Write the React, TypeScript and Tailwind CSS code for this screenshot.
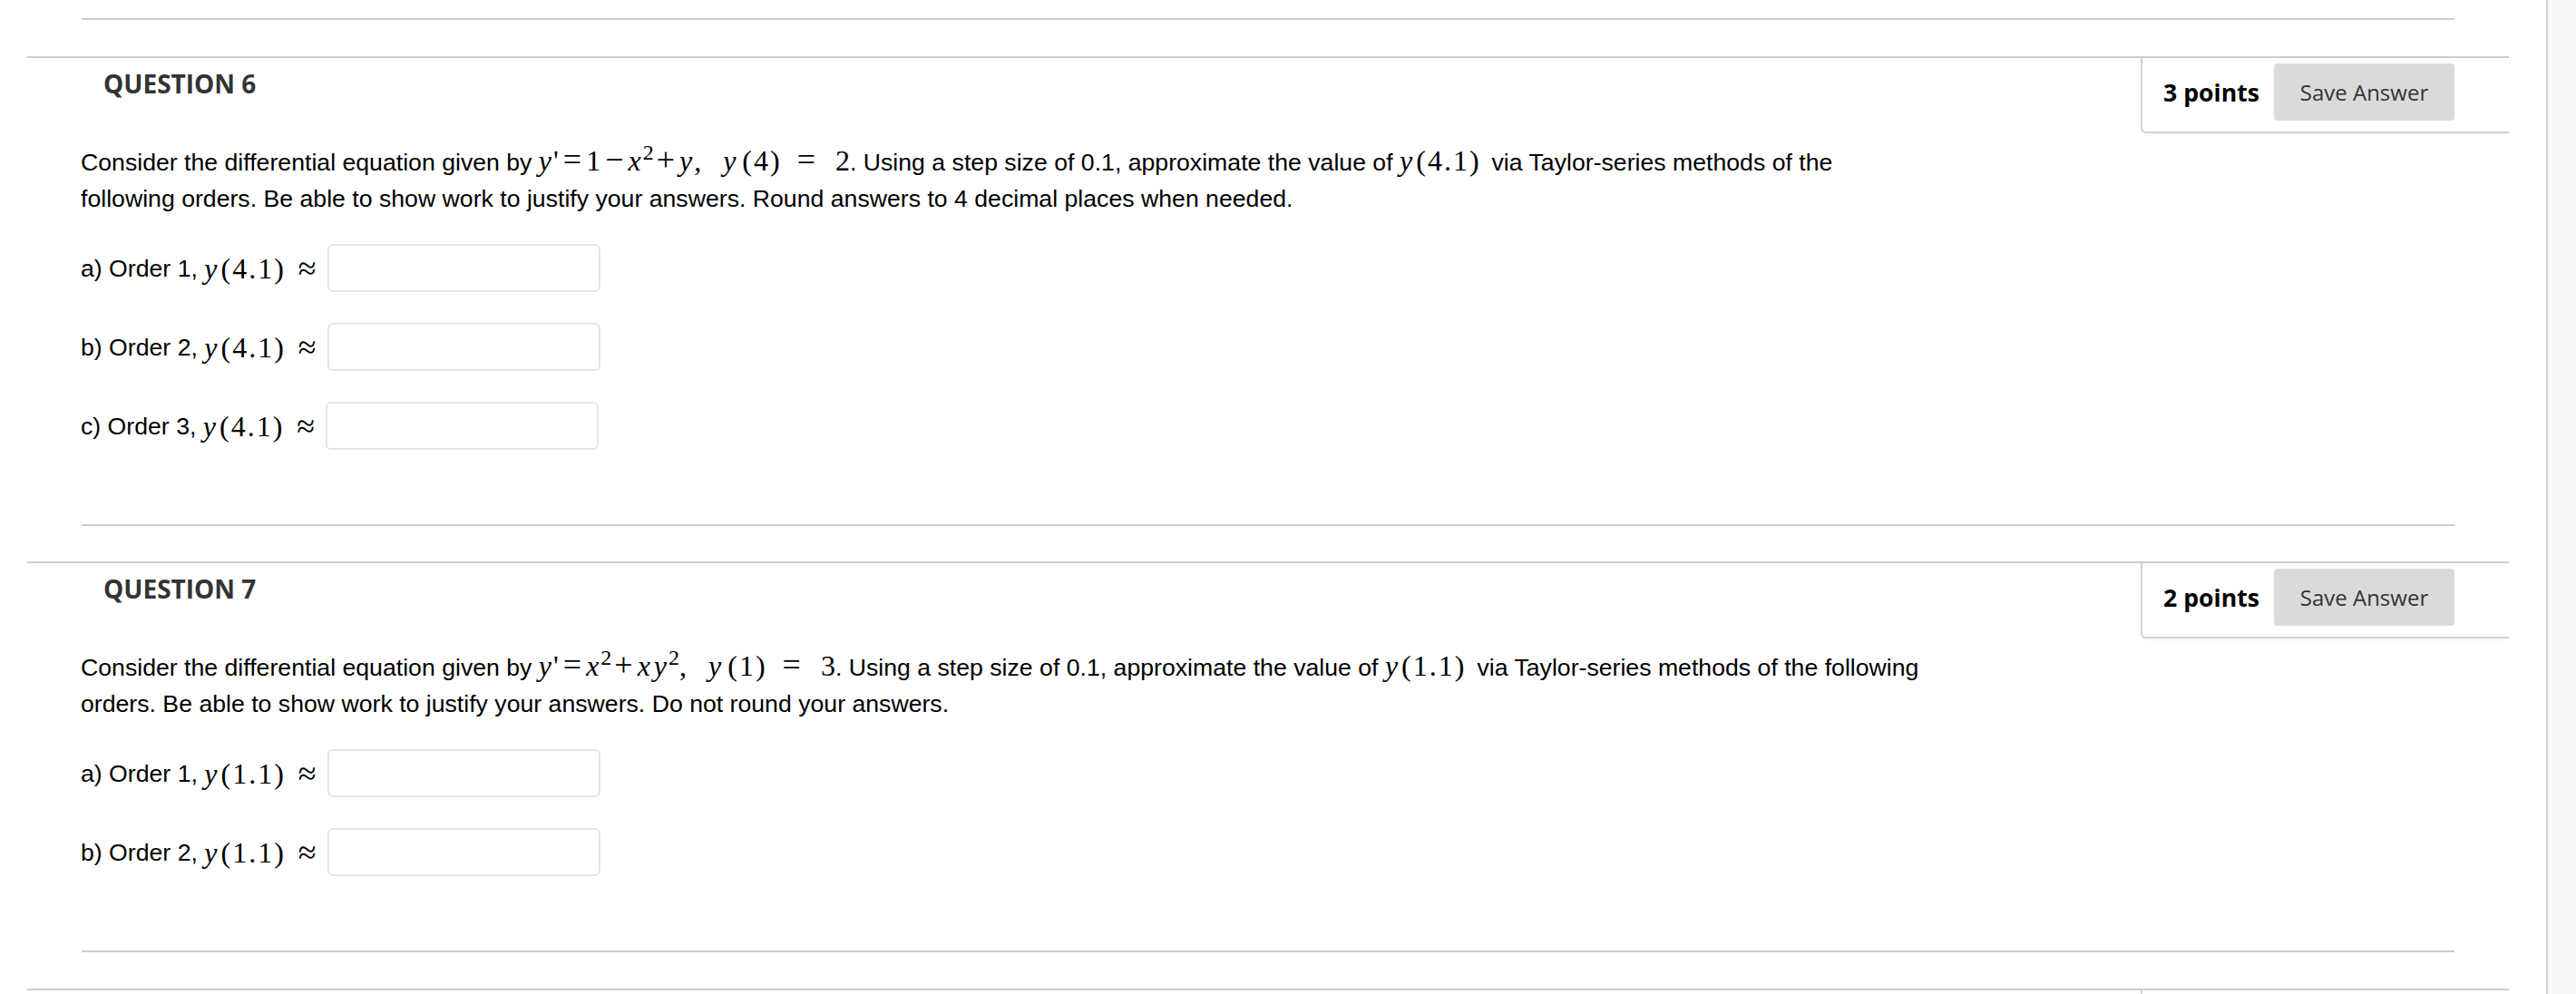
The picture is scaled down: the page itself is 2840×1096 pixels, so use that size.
import React from "react";

const SANS = "font-['Liberation_Sans',Arial,sans-serif]";
const SERIF = "font-['Liberation_Serif','Times_New_Roman',serif]";
const OPEN = "font-['Open_Sans',sans-serif]";

// inline math, roughly the MathJax look of the original
function M({ children }: { children: React.ReactNode }) {
  return <span className={`${SERIF} text-[32px] leading-none tracking-[2px] text-black`}>{children}</span>;
}

// relation / binary operator, drawn a bit larger like MathJax does
function Op({ children, className = "" }: { children: React.ReactNode; className?: string }) {
  return <span className={`text-[36px] leading-[0] ${className}`}>{children}</span>;
}

function Call({ arg }: { arg: string }) {
  return (
    <>
      <i>y</i>
      <span className="ml-[2px]">({arg})</span>
    </>
  );
}

function AnswerRow({ label, arg }: { label: string; arg: string }) {
  return (
    <div className="flex h-[53px] items-center">
      <span className={`${SANS} text-[26.67px] text-black`}>{label}&nbsp;</span>
      <M>
        <Call arg={arg} />
      </M>
      <span className={`${SERIF} ml-[14px] text-[36px] leading-none text-black`}>≈</span>
      <div className="ml-[12px] h-[53px] w-[301px] rounded-[6px] border-2 border-[#e4e4e4] bg-white" />
    </div>
  );
}

type QuestionProps = {
  number: number;
  points: string;
  text: React.ReactNode;
  rows: { label: string; arg: string }[];
};

function Question({ number, points, text, rows }: QuestionProps) {
  return (
    <section className="border-t-2 border-[#cccccc]">
      <div className="flex items-start justify-between">
        <h2 className={`${OPEN} pl-[84px] pt-[8px] text-[28px] font-bold leading-[40px] text-[#333333]`}>
          QUESTION {number}
        </h2>
        <div className="flex w-[406px] items-center rounded-bl-[6px] border-b-2 border-l-2 border-[#d2d2d2] pb-[12px] pl-[23px] pr-[60px] pt-[6px] shadow-[0_2px_3px_rgba(0,0,0,0.04)]">
          <span className={`${OPEN} text-[26.67px] font-bold text-black`}>{points}</span>
          <button
            type="button"
            className={`${OPEN} ml-auto h-[63px] w-[199px] rounded-[4px] bg-[#dadada] text-[24px] text-[#333333]`}
          >
            Save Answer
          </button>
        </div>
      </div>
      <div className="pl-[59px] pr-[60px]">
        <p className={`${SANS} mt-[12px] text-[26.67px] leading-[40px] text-black`}>{text}</p>
        <div className="mt-[30px] flex flex-col gap-[34px]">
          {rows.map((r) => (
            <AnswerRow key={r.label} label={r.label} arg={r.arg} />
          ))}
        </div>
        <div className="ml-[1px] mt-[82px] h-[2px] bg-[#cccccc]" />
      </div>
    </section>
  );
}

export default function App() {
  return (
    <div className="flex h-[1096px] w-[2840px] overflow-hidden bg-white">
      <div className="flex-1 pl-[30px] pr-[41px]">
        <div className="h-[20px]" />
        <div className="mx-[60px] h-[2px] bg-[#cccccc]" />
        <div className="h-[40px]" />

        <Question
          number={6}
          points="3 points"
          text={
            <>
              Consider the differential equation given by{" "}
              <M>
                <i>y</i>'<Op className="mx-[3px]">=</Op>1<Op className="mx-[3px]">−</Op>
                <i>x</i>
                <sup className="tracking-normal">2</sup>
                <Op className="mx-[3px]">+</Op>
                <i>y</i>,<span className="ml-[22px]" />
                <i>y</i>
                <span className="ml-[5px]">(4)</span>
                <Op className="ml-[17px] mr-[20px]">=</Op>
                <span className="tracking-normal">2</span>
              </M>
              . Using a step size of 0.1, approximate the value of{" "}
              <M>
                <Call arg="4.1" />
              </M>
              <span className="ml-[12px]">via Taylor-series methods of the</span>
              <br />
              following orders. Be able to show work to justify your answers. Round answers to 4 decimal places when
              needed.
            </>
          }
          rows={[
            { label: "a) Order 1,", arg: "4.1" },
            { label: "b) Order 2,", arg: "4.1" },
            { label: "c) Order 3,", arg: "4.1" },
          ]}
        />

        <div className="h-[39px]" />

        <Question
          number={7}
          points="2 points"
          text={
            <>
              Consider the differential equation given by{" "}
              <M>
                <i>y</i>'<Op className="mx-[3px]">=</Op>
                <i>x</i>
                <sup className="tracking-normal">2</sup>
                <Op className="mx-[3px]">+</Op>
                <i>x</i>
                <i className="ml-[2px]">y</i>
                <sup className="tracking-normal">2</sup>,<span className="ml-[22px]" />
                <i>y</i>
                <span className="ml-[5px]">(1)</span>
                <Op className="ml-[17px] mr-[20px]">=</Op>
                <span className="tracking-normal">3</span>
              </M>
              . Using a step size of 0.1, approximate the value of{" "}
              <M>
                <Call arg="1.1" />
              </M>
              <span className="ml-[12px]">via Taylor-series methods of the following</span>
              <br />
              orders. Be able to show work to justify your answers. Do not round your answers.
            </>
          }
          rows={[
            { label: "a) Order 1,", arg: "1.1" },
            { label: "b) Order 2,", arg: "1.1" },
          ]}
        />

        <div className="h-[40px]" />
        <section className="flex justify-end border-t-2 border-[#cccccc]">
          <div className="h-[40px] w-[406px] border-l-2 border-[#d2d2d2]" />
        </section>
      </div>
      <div className="w-[33px] border-l-2 border-[#cfcfcf] bg-[#f7f7f7]" />
    </div>
  );
}
